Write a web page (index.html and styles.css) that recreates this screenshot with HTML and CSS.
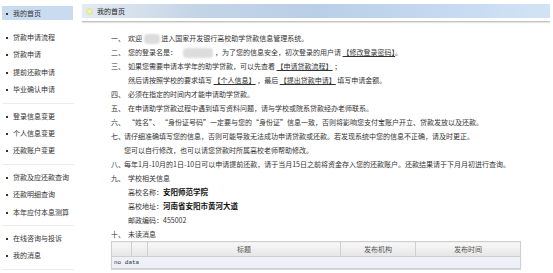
FILE: index.html
```html
<!DOCTYPE html>
<html lang="zh-CN">
<head>
    <meta charset="UTF-8">
    <title>我的首页</title>
    <link rel="stylesheet" href="styles.css">
</head>
<body>
    <div class="page">
        <div class="side">
            <div class="home">我的首页</div>
            <ul class="group first">
                <li>贷款申请流程</li>
                <li>贷款申请</li>
                <li>提前还款申请</li>
                <li>毕业确认申请</li>
            </ul>
            <ul class="group">
                <li>登录信息变更</li>
                <li>个人信息变更</li>
                <li>还款账户变更</li>
            </ul>
            <ul class="group">
                <li>贷款及应还款查询</li>
                <li>还款明细查询</li>
                <li>本年应付本息测算</li>
            </ul>
            <ul class="group">
                <li>在线咨询与投诉</li>
                <li>我的消息</li>
            </ul>
        </div>

        <div class="main">
            <div class="bar-wrap">
                <div class="bar"><span class="bar-icon"></span>我的首页</div>
            </div>

            <div class="content">
                <div class="line"><span class="num">一、</span>欢迎 <span class="blot blot-s"></span> 进入国家开发银行高校助学贷款信息管理系统。</div>
                <div class="line"><span class="num">二、</span>您的登录名是：<span class="blot blot-l"></span>，为了您的信息安全，初次登录的用户请 <a href="#">【修改登录密码】</a>。</div>
                <div class="line"><span class="num">三、</span>如果您需要申请本学年的助学贷款，可以先查看 <a href="#">【申请贷款流程】</a> ；</div>
                <div class="line indent">然后请按照学校的要求填写 <a href="#">【个人信息】</a> ，最后 <a href="#">【提出贷款申请】</a> 填写申请金额。</div>
                <div class="line"><span class="num">四、</span>必须在指定的时间内才能申请助学贷款。</div>
                <div class="line"><span class="num">五、</span>在申请助学贷款过程中遇到填写资料问题，请与学校或院系贷款经办老师联系。</div>
                <div class="line"><span class="num">六、</span>“姓名”、 “身份证号码”一定要与您的“身份证”信息一致，否则将影响您支付宝账户开立、贷款发放以及还款。</div>
                <div class="line"><span class="num tight">七、</span>请仔细准确填写您的信息，否则可能导致无法成功申请贷款或还款。若发现系统中您的信息不正确，请及时更正。</div>
                <div class="line indent tight">您可以自行修改，也可以请您贷款时所属高校老师帮助修改。</div>
                <div class="line"><span class="num tight">八、</span>每年1月-10月的1日-10日可以申请提前还款，请于当月15日之前将资金存入您的还款账户。还款结果请于下月月初进行查询。</div>
                <div class="line"><span class="num">九、</span>学校相关信息</div>
                <div class="line indent">高校名称：<b>安阳师范学院</b></div>
                <div class="line indent">高校地址：<b>河南省安阳市黄河大道</b></div>
                <div class="line indent">邮政编码：455002</div>
                <div class="line"><span class="num">十、</span>未读消息</div>

                <table class="msg">
                    <tr>
                        <th class="c1"></th>
                        <th class="c2"></th>
                        <th class="c3">标题</th>
                        <th class="c4">发布机构</th>
                        <th class="c5">发布时间</th>
                    </tr>
                    <tr>
                        <td colspan="5" class="empty">no data</td>
                    </tr>
                </table>
            </div>
        </div>
    </div>
</body>
</html>
```

FILE: styles.css
```css
body {
    margin: 0;
    font-family: "Noto Sans CJK SC", "DejaVu Sans", sans-serif;
    font-size: 7px;
    color: #333;
    background-color: #fff;
}
.page {
    display: flex;
}

/* menu on the left */
.side {
    width: 78px;
    padding: 6px 0 0 2px;
    box-sizing: border-box;
    flex-shrink: 0;
}
.home {
    width: 71px;
    height: 14px;
    line-height: 14px;
    padding-left: 4px;
    box-sizing: border-box;
    background-color: #c9dcef;
}
.home::before,
.group li::before {
    content: "";
    display: inline-block;
    width: 2px;
    height: 2px;
    background-color: #333;
    margin-right: 5px;
    vertical-align: middle;
}
.group {
    list-style: none;
    margin: 0;
    padding: 4px 0;
    width: 72px;
    border-bottom: 1px solid #ececec;
}
.group.first {
    margin-top: 5px;
}
.group li {
    height: 17.4px;
    line-height: 17.4px;
    padding-left: 4px;
    white-space: nowrap;
}

/* main part */
.main {
    flex: 1;
    margin: 0 3px 0 4px;
    padding-top: 4px;
    min-width: 0;
}
.bar-wrap {
    padding-bottom: 3px;
    border-bottom: 1px solid #c4c4c4;
    box-shadow: 0 1px 1px #e4e4e4;
}
.bar {
    height: 14px;
    display: flex;
    align-items: center;
    padding-left: 4px;
    color: #222;
    background: linear-gradient(to right, #e3ebf3 0%, #c3d4e6 25%, #b9cfe7 50%, #c6dbf1 80%, #d2e3f5 100%);
}
.bar-icon {
    width: 7px;
    height: 7px;
    border-radius: 50%;
    margin-right: 4px;
    background: radial-gradient(circle, #f4f6c0 0%, #dfe89a 60%, #d3e0b8 100%);
}
.content {
    margin-top: 9px;
    padding-left: 29px;
}
.line {
    height: 14px;
    line-height: 14px;
    white-space: nowrap;
}
.num {
    display: inline-block;
    width: 17px;
}
.num.tight {
    width: 13px;
}
.indent {
    padding-left: 17px;
}
.indent.tight {
    padding-left: 13px;
}
.line a {
    color: #333;
    text-decoration: underline;
}
.line b {
    color: #111;
    font-size: 7.5px;
}
.blot {
    display: inline-block;
    height: 10px;
    vertical-align: middle;
    border-radius: 4px;
    background-color: #dcdcdc;
    filter: blur(1px);
}
.blot-s {
    width: 16px;
}
.blot-l {
    width: 30px;
    margin: 0 2px 0 6px;
}

/* unread messages table */
.msg {
    width: 410px;
    border-collapse: collapse;
    table-layout: fixed;
    box-shadow: 0 1px 1px #d8d8d8;
}
.msg th {
    height: 14px;
    padding: 0;
    font-weight: normal;
    color: #555;
    border: 1px solid #cfcfcf;
    background: linear-gradient(#f8f8f8, #e6e6e6);
}
.c1 { width: 19px; }
.c2 { width: 15px; }
.c3 { width: 192px; }
.c4 { width: 74px; }
.msg .empty {
    height: 11px;
    padding: 0 0 0 2px;
    font-family: "Liberation Mono", monospace;
    font-size: 6px;
    color: #333;
    background-color: #eef0f9;
    border: 1px solid #cfcfcf;
}
```
